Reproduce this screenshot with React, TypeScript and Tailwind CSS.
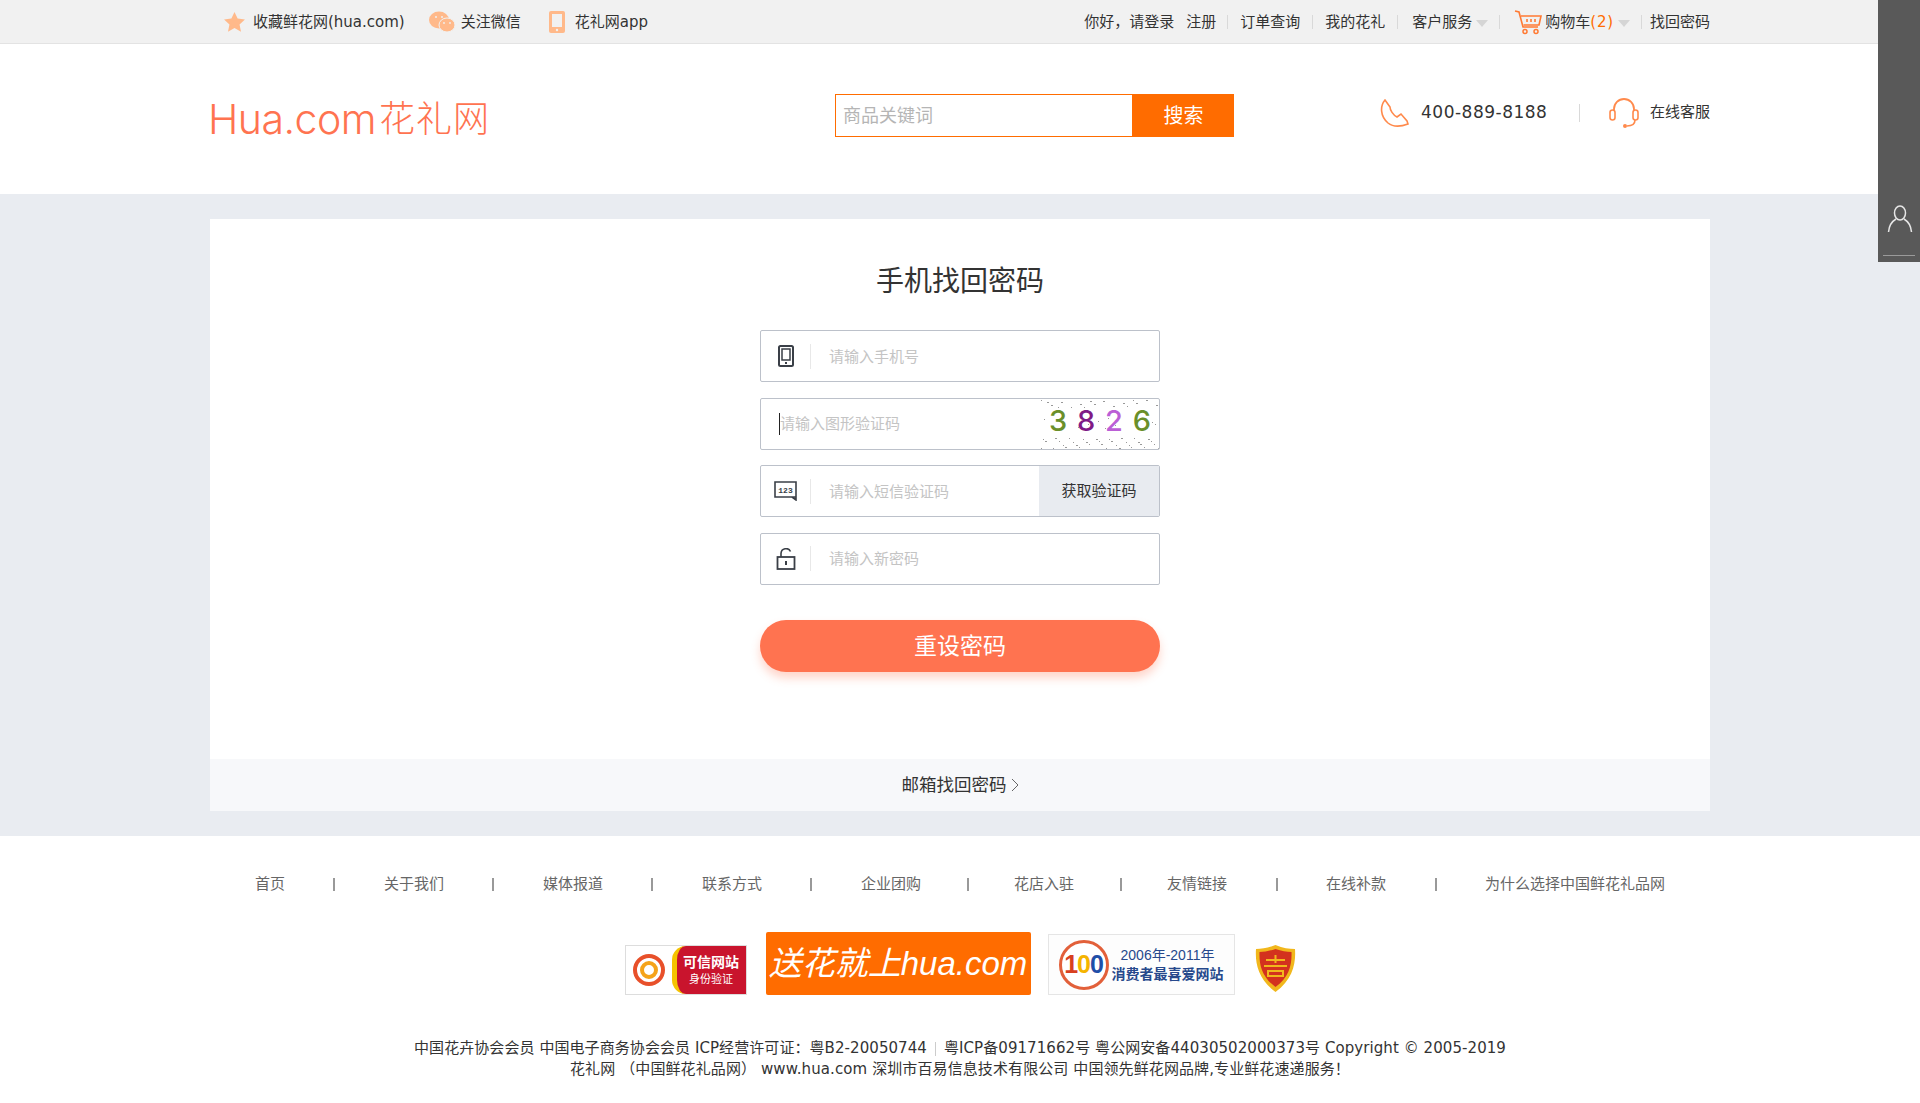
import React from 'react'

const CJK = "font-['DejaVu_Sans','Noto_Sans_CJK_SC',sans-serif]"

const navLinks = ['首页', '关于我们', '媒体报道', '联系方式', '企业团购', '花店入驻', '友情链接', '在线补款', '为什么选择中国鲜花礼品网']

// noise dots for the picture captcha
const dots = Array.from({ length: 90 }, (_, i) => ({
  x: (i * 47 + (i % 7) * 13) % 118,
  y: i % 3 === 0 ? (i * 19) % 8 + 1 : (i * 31) % 12 + 38 - (i % 5 === 0 ? 20 : 0),
}))

function Sep() {
  return <span className="block h-[14px] w-px bg-[#d9d9d9]" />
}

function Caret() {
  return <span className="ml-[4px] mt-[2px] h-0 w-0 border-x-[6px] border-t-[7px] border-x-transparent border-t-[#d5d5d5]" />
}

function PhoneIcon() {
  return (
    <svg width="16" height="22" viewBox="0 0 16 22">
      <rect x="1" y="1" width="14" height="20" rx="1.5" fill="none" stroke="#3a3f47" strokeWidth="2" />
      <rect x="4" y="4" width="8" height="11" fill="none" stroke="#3a3f47" strokeWidth="1.5" />
      <rect x="7" y="17" width="2" height="2" fill="#3a3f47" />
    </svg>
  )
}

function SmsIcon() {
  return (
    <svg width="24" height="20" viewBox="0 0 24 20">
      <path d="M1 1h21v15H1z M22 16v3l-4-3" fill="none" stroke="#3a3f47" strokeWidth="1.6" />
      <text x="11.5" y="12" textAnchor="middle" fontSize="8" fontWeight="700" fontFamily="Liberation Mono, monospace" fill="#3a3f47">123</text>
    </svg>
  )
}

function LockIcon() {
  return (
    <svg width="20" height="22" viewBox="0 0 20 22">
      <path d="M5 9V5.5a5 5 0 0 1 9.5-2" fill="none" stroke="#3a3f47" strokeWidth="1.6" />
      <rect x="1.5" y="9" width="17" height="12" fill="none" stroke="#3a3f47" strokeWidth="1.8" />
      <rect x="9" y="13" width="2" height="4" fill="#3a3f47" />
    </svg>
  )
}

function Field({ icon, placeholder, children }: { icon: React.ReactNode; placeholder: string; children?: React.ReactNode }) {
  return (
    <div className="flex h-[52px] w-[400px] items-center overflow-hidden rounded-[2px] border border-[#bcc1ca] bg-white">
      <span className="flex w-[49px] justify-center">{icon}</span>
      <span className="h-[25px] w-px bg-[#e8e8e8]" />
      <span className="ml-[18px] flex-1 pt-[2px] text-[15px] text-[#c4c4c4]">{placeholder}</span>
      {children}
    </div>
  )
}

export default function App() {
  return (
    <div className={`relative min-h-[1103px] bg-white text-[#333] ${CJK}`}>
      {/* Side rail */}
      <div className="absolute right-0 top-0 z-10 flex h-[262px] w-[42px] flex-col items-center justify-end bg-[#595959] pb-[6px]">
        <svg width="26" height="28" viewBox="0 0 26 28" className="mb-[22px] ml-[2px]">
          <ellipse cx="13" cy="8" rx="5.5" ry="7" fill="none" stroke="#e6e6e6" strokeWidth="1.5" />
          <path d="M9 14 C4 17 2 21 1.500 27 M17 14 C22 17 24 21 24.500 27" fill="none" stroke="#e6e6e6" strokeWidth="1.5" />
        </svg>
        <span className="h-px w-[32px] bg-[#9a9a9a]" />
      </div>

      {/* Top bar */}
      <div className="h-[44px] border-b border-[#e3e3e3] bg-[#f1f1f1] text-[15px] text-[#333]">
        <div className="mx-auto flex h-[44px] w-[1500px] items-center justify-between">
          <div className="flex items-center pl-[14px]">
            <svg width="21" height="20" viewBox="0 0 24 23">
              <path d="M12 0l3.600 7.600 8.400 1-6.200 5.700 1.700 8.300L12 18.400l-7.500 4.200 1.700-8.300L0 8.600l8.400-1z" fill="#ffb98a" />
            </svg>
            <span className="ml-[8px]">收藏鲜花网(hua.com)</span>
            <svg width="26" height="22" viewBox="0 0 26 22" className="ml-[24px]">
              <ellipse cx="10" cy="9" rx="10" ry="8.500" fill="#ffb98a" />
              <ellipse cx="18" cy="14" rx="8" ry="7" fill="#ffb98a" stroke="#f1f1f1" strokeWidth="1" />
              <circle cx="7" cy="6" r="1" fill="#f1f1f1" />
              <circle cx="13" cy="6" r="1" fill="#f1f1f1" />
              <circle cx="15" cy="12" r="0.9" fill="#f1f1f1" />
              <circle cx="21" cy="12" r="0.9" fill="#f1f1f1" />
            </svg>
            <span className="ml-[6px]">关注微信</span>
            <svg width="16" height="22" viewBox="0 0 16 22" className="ml-[28px]">
              <rect width="16" height="22" rx="2" fill="#ffb98a" />
              <rect x="3" y="3" width="10" height="13" fill="#f1f1f1" />
              <circle cx="8" cy="19" r="1.200" fill="#f1f1f1" />
            </svg>
            <span className="ml-[10px]">花礼网app</span>
          </div>
          <div className="flex items-center">
            <span>你好，请登录</span>
            <span className="ml-[12px]">注册</span>
            <span className="ml-[11px] mr-[12px]"><Sep /></span>
            <span>订单查询</span>
            <span className="mx-[12px]"><Sep /></span>
            <span>我的花礼</span>
            <span className="ml-[12px] mr-[14px]"><Sep /></span>
            <span>客户服务</span>
            <Caret />
            <span className="ml-[11px] mr-[14px]"><Sep /></span>
            <svg width="28" height="25" viewBox="0 0 28 25">
              <path d="M1 1l4 1 4 15h15" fill="none" stroke="#ff7a33" strokeWidth="1.6" />
              <path d="M7 6h20l-2 9H9.500" fill="none" stroke="#ff7a33" strokeWidth="1.6" />
              <path d="M13 9v3M17 9v3M21 9v3" stroke="#ff7a33" strokeWidth="1.6" />
              <circle cx="11" cy="21.500" r="2" fill="none" stroke="#ff7a33" strokeWidth="1.5" />
              <circle cx="22" cy="21.500" r="2" fill="none" stroke="#ff7a33" strokeWidth="1.5" />
            </svg>
            <span className="ml-[3px]">购物车<span className="tracking-[0.8px] text-[#ff6c00]">(2)</span></span>
            <Caret />
            <span className="ml-[11px] mr-[8px]"><Sep /></span>
            <span>找回密码</span>
          </div>
        </div>
      </div>

      {/* Header */}
      <div className="mx-auto flex h-[150px] w-[1500px] items-center whitespace-nowrap">
        <div className="-ml-[2px] flex w-[627px] shrink-0 items-end leading-none text-[#ff7350]">
          <span className="font-['Inter',sans-serif] text-[41px] font-light tracking-[-0.5px]">Hua.com</span>
          <span className="mb-[6px] ml-[3px] font-['Noto_Sans_CJK_SC',sans-serif] text-[36px] font-light tracking-[1px]">花礼网</span>
        </div>
        <div className="flex h-[43px] w-[399px] shrink-0 -translate-y-[4px]">
          <div className="flex flex-1 items-center border border-[#ff6c00] px-[7px] pt-[1px] text-[18px] text-[#b5b5b5]">商品关键词</div>
          <button className="w-[101px] bg-[#ff6c00] pt-[2px] text-[20px] text-white">搜索</button>
        </div>
        <svg width="30" height="28" viewBox="0 0 30 28" className="ml-[146px] shrink-0 -translate-y-[6px]">
          <path d="M5 1C0 7 0 17 8 24c5 4 12 4 20 1l-1-3-6-7-4 3C13 16 10 11 10 8z" fill="none" stroke="#ff8a4c" strokeWidth="1.6" />
        </svg>
        <span className="ml-[11px] w-[127px] shrink-0 -translate-y-[6px] text-[17px] tracking-[0.5px]">400-889-8188</span>
        <span className="ml-[31px] h-[18px] w-px shrink-0 -translate-y-[6px] bg-[#d9d9d9]" />
        <svg width="32" height="32" viewBox="0 0 32 32" className="ml-[28px] shrink-0 -translate-y-[6px]">
          <path d="M6 14V12a10 10 0 0 1 20 0v2" fill="none" stroke="#ff8a4c" strokeWidth="1.8" />
          <rect x="2" y="13" width="5" height="10" rx="2.500" fill="none" stroke="#ff8a4c" strokeWidth="1.6" />
          <rect x="25" y="13" width="5" height="10" rx="2.500" fill="none" stroke="#ff8a4c" strokeWidth="1.6" />
          <path d="M27 23c0 4-3 6-8 6" fill="none" stroke="#ff8a4c" strokeWidth="1.6" />
          <circle cx="17" cy="29" r="2" fill="#ff8a4c" />
        </svg>
        <span className="ml-[10px] shrink-0 -translate-y-[7px] text-[15px]">在线客服</span>
      </div>

      {/* Main */}
      <div className="bg-[#e9ecf1] py-[25px]">
        <div className="mx-auto w-[1500px] bg-white">
          <div className="flex h-[540px] flex-col items-center pt-[43px]">
            <h1 className="text-[28px] leading-[40px] text-[#333]">手机找回密码</h1>
            <div className="mt-[28px] flex flex-col gap-[15.5px]">
              <Field icon={<PhoneIcon />} placeholder="请输入手机号" />
              <div className="relative flex h-[52px] w-[400px] items-center overflow-hidden rounded-[2px] border border-[#bcc1ca] bg-white">
                <span className="absolute left-[18px] top-[14px] h-[22px] w-px bg-[#222]" />
                <span className="ml-[19px] flex-1 pt-[2px] text-[15px] text-[#c4c4c4]">请输入图形验证码</span>
                <div className="relative h-full w-[118px]">
                  <svg className="absolute inset-0" width="118" height="50">
                    {dots.map((d, i) => (
                      <rect key={i} x={d.x} y={d.y} width="1" height="1" fill="#999" />
                    ))}
                  </svg>
                  <div className="relative flex h-full items-center justify-between px-[8px] pb-[5px] font-['Inter',sans-serif] text-[29px] font-medium">
                    <span className="text-[#6a8f2a]">3</span>
                    <span className="text-[#7f1a86]">8</span>
                    <span className="text-[#bb5fd6]">2</span>
                    <span className="text-[#6a8f2a]">6</span>
                  </div>
                </div>
              </div>
              <Field icon={<SmsIcon />} placeholder="请输入短信验证码">
                <span className="flex h-full w-[120px] items-center justify-center bg-[#e8ebf0] text-[15px] text-[#333]">获取验证码</span>
              </Field>
              <Field icon={<LockIcon />} placeholder="请输入新密码" />
            </div>
            <button className="mt-[35px] h-[52px] w-[400px] rounded-full bg-[#ff7350] pt-[2px] text-[23px] text-white shadow-[0_6px_10px_rgba(255,115,80,0.3)]">
              重设密码
            </button>
          </div>
          <div className="flex h-[52px] items-center justify-center bg-[#f7f8fa] text-[17.5px] text-[#333]">
            邮箱找回密码
            <svg width="8" height="14" viewBox="0 0 8 14" className="ml-[4px]">
              <path d="M1 1l6 6-6 6" fill="none" stroke="#666" strokeWidth="1" />
            </svg>
          </div>
        </div>
      </div>

      {/* Footer */}
      <div className="flex flex-col items-center pt-[37px]">
        <div className="flex items-center text-[15px] leading-[22px] text-[#666]">
          {navLinks.map((link, i) => (
            <React.Fragment key={link}>
              {i > 0 && (
                <span className={`${i === 5 || i === 6 ? 'mx-[45.5px]' : 'mx-[48.5px]'} h-[13px] w-[2px] bg-[#999]`} />
              )}
              <span>{link}</span>
            </React.Fragment>
          ))}
        </div>

        <div className="mt-[37px] flex h-[63px] items-end">
          {/* trust badge */}
          <div className="flex h-[50px] w-[122px] overflow-hidden border border-[#ddd] bg-white">
            <div className="relative flex w-[46px] items-center justify-center">
              <svg width="34" height="36" viewBox="0 0 34 36">
                <circle cx="17" cy="18" r="14" fill="none" stroke="#e8502a" strokeWidth="4" />
                <circle cx="17" cy="18" r="7" fill="none" stroke="#f5a31a" strokeWidth="4" />
              </svg>
            </div>
            <div className="flex flex-1 flex-col items-center justify-center rounded-l-[14px] border-l-[5px] border-[#f5c400] bg-[#c9142d] text-white">
              <span className="whitespace-nowrap text-[14px] font-bold leading-[19px]">可信网站</span>
              <span className="whitespace-nowrap text-[11px] leading-[15px]">身份验证</span>
            </div>
          </div>
          <div className="ml-[19px] flex h-[63px] w-[265px] items-center justify-center whitespace-nowrap rounded-[2px] bg-[#ff6c00] font-['Liberation_Sans','Noto_Sans_CJK_SC',sans-serif] text-[33px] italic text-white">
            送花就上hua.com
          </div>
          <div className="ml-[17px] flex h-[61px] w-[187px] items-center border border-[#e5e5e5] bg-[#fdfdfd] pl-[10px]">
            <div className="relative flex h-[50px] w-[50px] shrink-0 items-center justify-center rounded-full border-[3px] border-[#e2603a] bg-white font-['Liberation_Sans',sans-serif] text-[25px] font-bold tracking-[-1px]">
              <span className="text-[#d8401f]">1</span>
              <span className="text-[#f5b400]">0</span>
              <span className="text-[#1f4fa8]">0</span>
            </div>
            <div className="ml-[3px] flex flex-col items-center whitespace-nowrap font-['Liberation_Sans','Noto_Sans_CJK_SC',sans-serif] text-[#27498c]">
              <span className="text-[14px] leading-[19px]">2006年-2011年</span>
              <span className="text-[14px] font-bold leading-[19px]">消费者最喜爱网站</span>
            </div>
          </div>
          <svg width="41" height="47" viewBox="0 0 41 47" className="mb-[3px] ml-[20px]">
            <path d="M20.500 0C28 3 34 4 40 4c1 14-2 30-19.500 43C3 34 0 18 1 4c6 0 12-1 19.500-4z" fill="#f1b71c" />
            <path d="M20.500 4c6 2 11 3 16 3 .5 12-2 25-16 35C6.500 32 4 19 4.500 7c5 0 10-1 16-3z" fill="#d3321e" />
            <path d="M11 15h19M20.500 10v8M9 21h23M13 26h15v5H13z" fill="none" stroke="#f1b71c" strokeWidth="2" />
          </svg>
        </div>

        <div className="mt-[43px] flex flex-col items-center text-[15px] leading-[21px] text-[#333]">
          <p className="flex items-center tracking-[0.07px]">
            中国花卉协会会员 中国电子商务协会会员 ICP经营许可证：粤B2-20050744
            <span className="mx-[8px] h-[14px] w-px bg-[#ccc]" />
            粤ICP备09171662号 粤公网安备44030502000373号 Copyright © 2005-2019
          </p>
          <p className="tracking-[0.1px]">花礼网 （中国鲜花礼品网） www.hua.com 深圳市百易信息技术有限公司 中国领先鲜花网品牌,专业鲜花速递服务！</p>
        </div>
      </div>
    </div>
  )
}
